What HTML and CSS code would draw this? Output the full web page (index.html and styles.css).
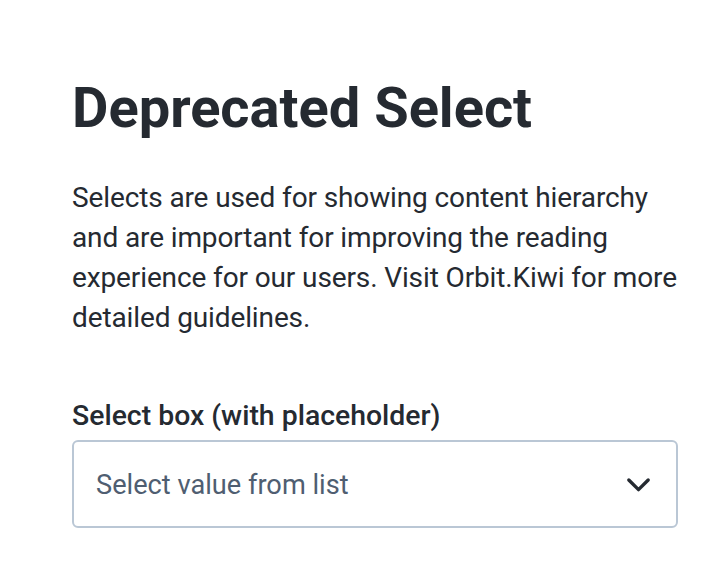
FILE: index.html
```html
<!DOCTYPE html>
<html lang="en">
<head>
<meta charset="utf-8">
<title>Deprecated Select</title>
<link rel="stylesheet" href="styles.css">
</head>
<body>
<main class="page">
  <h1 class="title">Deprecated Select</h1>
  <p class="lead">Selects are used for showing content hierarchy and are important for improving the reading experience for our users. Visit Orbit.Kiwi for more detailed guidelines.</p>
  <div class="field">
    <label class="field-label" for="sel">Select box (with placeholder)</label>
    <div class="select">
      <span class="select-value" id="sel">Select value from list</span>
      <svg class="chevron" viewBox="0 0 24 24" width="24" height="24" aria-hidden="true"><path d="M4.5 8.5 12 16l7.5-7.5" fill="none" stroke="#252A31" stroke-width="2.6" stroke-linecap="round" stroke-linejoin="round"/></svg>
    </div>
  </div>
</main>
</body>
</html>
```

FILE: styles.css
```css
* { box-sizing: border-box; }
html, body { margin: 0; padding: 0; background: #fff; }
body { font-family: Roboto, "Noto Sans", sans-serif; color: #252A31; }
.page { padding: 72px 40px 0 72px; width: 718px; }
.title { margin: 0; font-size: 56px; line-height: 72px; font-weight: 700; }
.lead { margin: 34px 0 0; font-size: 28px; line-height: 40px; font-weight: 400; letter-spacing: -0.12px; }
.field { margin-top: 60px; display: flex; flex-direction: column; }
.field-label { font-size: 28.4px; line-height: 36px; font-weight: 500; margin-bottom: 6px; }
.select { height: 88px; border: 2px solid #BAC7D5; border-radius: 6px; display: flex; align-items: center; justify-content: space-between; padding: 2px 22px 0 22px; }
.select-value { font-size: 27.2px; color: #4F5E71; }
.chevron { width: 31px; height: 31px; margin-top: -2px; }
```
